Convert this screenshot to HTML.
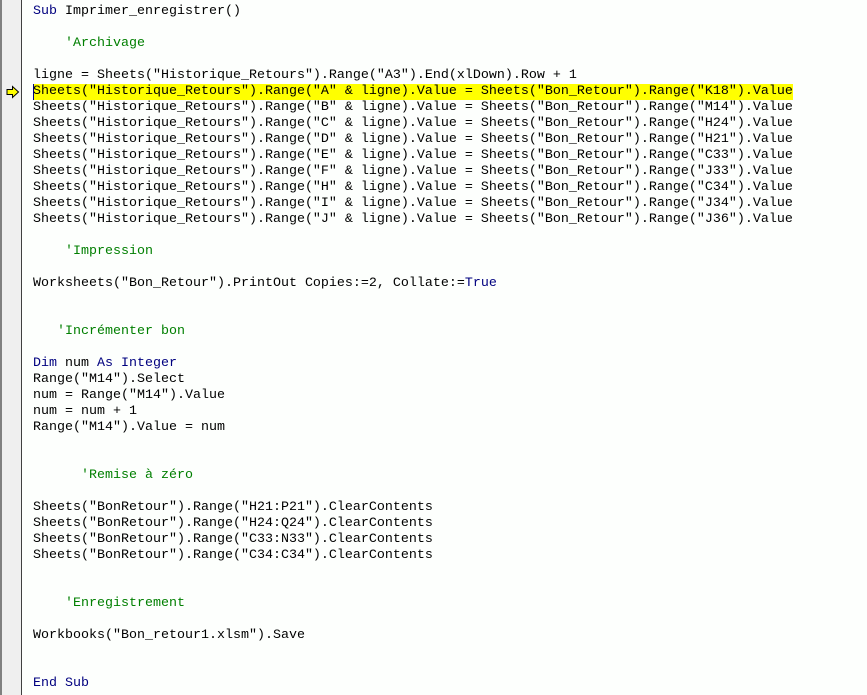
<!DOCTYPE html>
<html><head><meta charset="utf-8"><style>
html,body{margin:0;padding:0;width:867px;height:695px;overflow:hidden;background:#fdfffd;}
#g{position:absolute;left:0;top:0;width:21px;height:695px;background:#efefef;border-left:2px solid #808080;box-sizing:border-box;}
#sep{position:absolute;left:21px;top:0;width:1px;height:695px;background:#404040;}
pre{position:absolute;left:33px;top:4px;margin:0;font-family:"Liberation Mono",monospace;font-size:13.33px;line-height:16px;color:#000;}
.k{color:#00007f}.c{color:#007f00}
.hl{background:#ffff00;display:inline-block;box-shadow:inset 1px 0 0 #00007f;}
svg{position:absolute;left:6px;top:85px;}
</style></head><body>
<div id="g"></div><div id="sep"></div>
<svg width="14" height="14" viewBox="0 0 14 14"><path d="M1 4.5H6.5V1.5L12.5 7L6.5 12.5V9.5H1Z" fill="#ffff00" stroke="#000" stroke-width="1"/></svg>
<pre><span class="k">Sub</span> Imprimer_enregistrer()

    <span class="c">'Archivage</span>

ligne = Sheets("Historique_Retours").Range("A3").End(xlDown).Row + 1
<span class="hl">Sheets("Historique_Retours").Range("A" &amp; ligne).Value = Sheets("Bon_Retour").Range("K18").Value</span>
Sheets("Historique_Retours").Range("B" &amp; ligne).Value = Sheets("Bon_Retour").Range("M14").Value
Sheets("Historique_Retours").Range("C" &amp; ligne).Value = Sheets("Bon_Retour").Range("H24").Value
Sheets("Historique_Retours").Range("D" &amp; ligne).Value = Sheets("Bon_Retour").Range("H21").Value
Sheets("Historique_Retours").Range("E" &amp; ligne).Value = Sheets("Bon_Retour").Range("C33").Value
Sheets("Historique_Retours").Range("F" &amp; ligne).Value = Sheets("Bon_Retour").Range("J33").Value
Sheets("Historique_Retours").Range("H" &amp; ligne).Value = Sheets("Bon_Retour").Range("C34").Value
Sheets("Historique_Retours").Range("I" &amp; ligne).Value = Sheets("Bon_Retour").Range("J34").Value
Sheets("Historique_Retours").Range("J" &amp; ligne).Value = Sheets("Bon_Retour").Range("J36").Value

    <span class="c">'Impression</span>

Worksheets("Bon_Retour").PrintOut Copies:=2, Collate:=<span class="k">True</span>


   <span class="c">'Incrémenter bon</span>

<span class="k">Dim</span> num <span class="k">As Integer</span>
Range("M14").Select
num = Range("M14").Value
num = num + 1
Range("M14").Value = num


      <span class="c">'Remise à zéro</span>

Sheets("BonRetour").Range("H21:P21").ClearContents
Sheets("BonRetour").Range("H24:Q24").ClearContents
Sheets("BonRetour").Range("C33:N33").ClearContents
Sheets("BonRetour").Range("C34:C34").ClearContents


    <span class="c">'Enregistrement</span>

Workbooks("Bon_retour1.xlsm").Save


<span class="k">End Sub</span></pre>
</body></html>
